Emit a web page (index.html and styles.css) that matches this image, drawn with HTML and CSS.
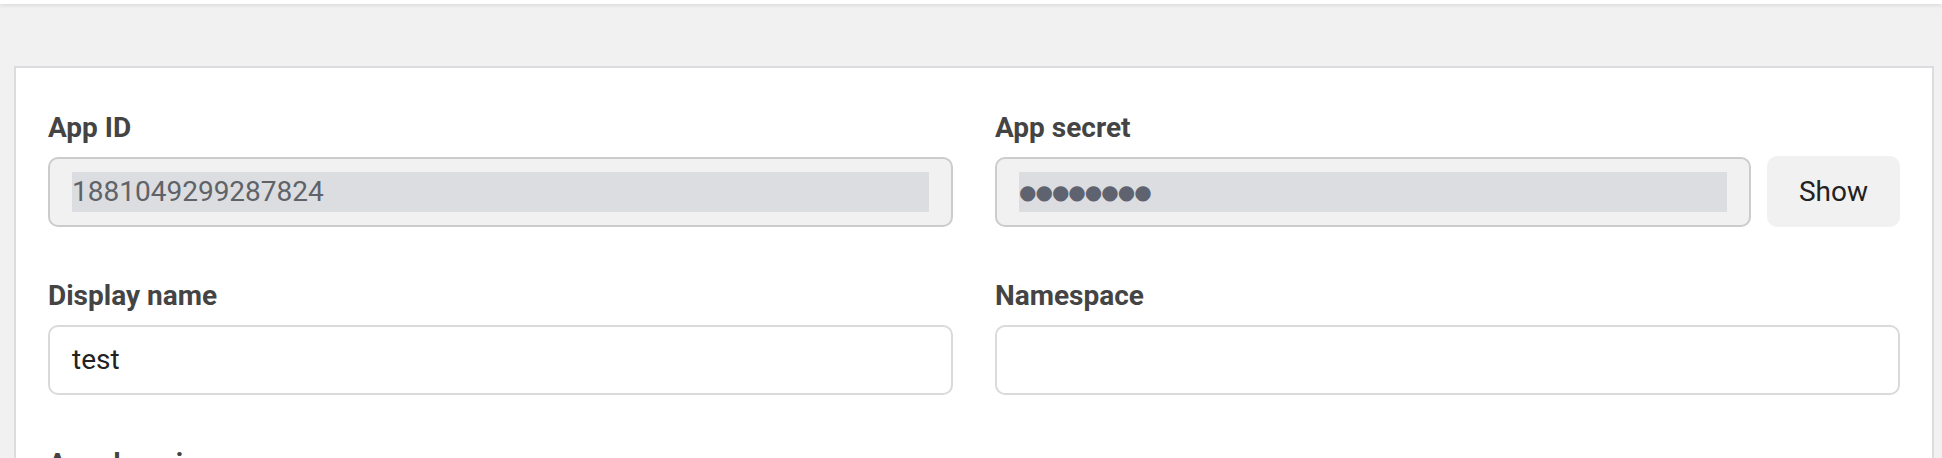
FILE: index.html
```html
<!DOCTYPE html>
<html lang="en">
<head>
<meta charset="utf-8">
<title>App settings</title>
<link rel="stylesheet" href="styles.css">
</head>
<body>
<div class="topbar"></div>
<main class="page">
  <section class="card">
    <div class="form-grid">
      <div class="field">
        <label class="field-label">App ID</label>
        <div class="input input-readonly"><span class="selected">1881049299287824</span></div>
      </div>
      <div class="field">
        <label class="field-label">App secret</label>
        <div class="secret-row">
          <div class="input input-readonly"><span class="selected dots">●●●●●●●●</span></div>
          <button class="btn-show" type="button">Show</button>
        </div>
      </div>
      <div class="field">
        <label class="field-label">Display name</label>
        <div class="input input-edit"><span class="value">test</span></div>
      </div>
      <div class="field">
        <label class="field-label">Namespace</label>
        <div class="input input-edit"><span class="value"></span></div>
      </div>
      <div class="field">
        <label class="field-label">App domains</label>
      </div>
    </div>
  </section>
</main>
</body>
</html>
```

FILE: styles.css
```css
* { box-sizing: border-box; }

html, body {
  margin: 0;
  padding: 0;
  background: #f1f1f1;
  font-family: Roboto, "Liberation Sans", Arial, sans-serif;
  overflow: hidden;
}

.topbar {
  height: 4px;
  background: #ffffff;
  box-shadow: 0 1px 4px rgba(0, 0, 0, 0.12);
  position: relative;
  z-index: 1;
}

.page {
  padding: 62px 8px 0 14px;
}

.card {
  background: #ffffff;
  border: 2px solid #dcdce0;
  padding: 44px 32px 40px 32px;
}

.form-grid {
  display: grid;
  grid-template-columns: 1fr 1fr;
  column-gap: 42px;
  row-gap: 53px;
}

.field {
  display: flex;
  flex-direction: column;
}

.field-label {
  font-size: 28px;
  font-weight: 700;
  line-height: 32px;
  color: #444444;
  margin-bottom: 13px;
}

.input {
  height: 70px;
  border: 2px solid #cccccc;
  border-radius: 10px;
  padding: 13px 22px;
  font-size: 28px;
  line-height: 40px;
  display: flex;
}

.input-readonly {
  background: #f1f1f1;
  color: #5f6368;
}

.input-edit {
  background: #ffffff;
  border-color: #dadada;
  color: #222222;
}

.selected {
  flex: 1;
  background: #dcdde0;
  white-space: nowrap;
  overflow: hidden;
}

.dots {
  font-family: "DejaVu Sans", sans-serif;
  font-size: 20px;
  letter-spacing: -1px;
  color: #5f6370;
}

.secret-row {
  display: flex;
  align-items: flex-start;
  gap: 16px;
}

.secret-row .input {
  flex: 1;
}

.btn-show {
  width: 133px;
  height: 71px;
  margin-top: -1px;
  border: none;
  border-radius: 10px;
  background: #f1f1f1;
  color: #222222;
  font-family: Roboto, "Liberation Sans", Arial, sans-serif;
  font-size: 28px;
  padding: 0;
}
```
